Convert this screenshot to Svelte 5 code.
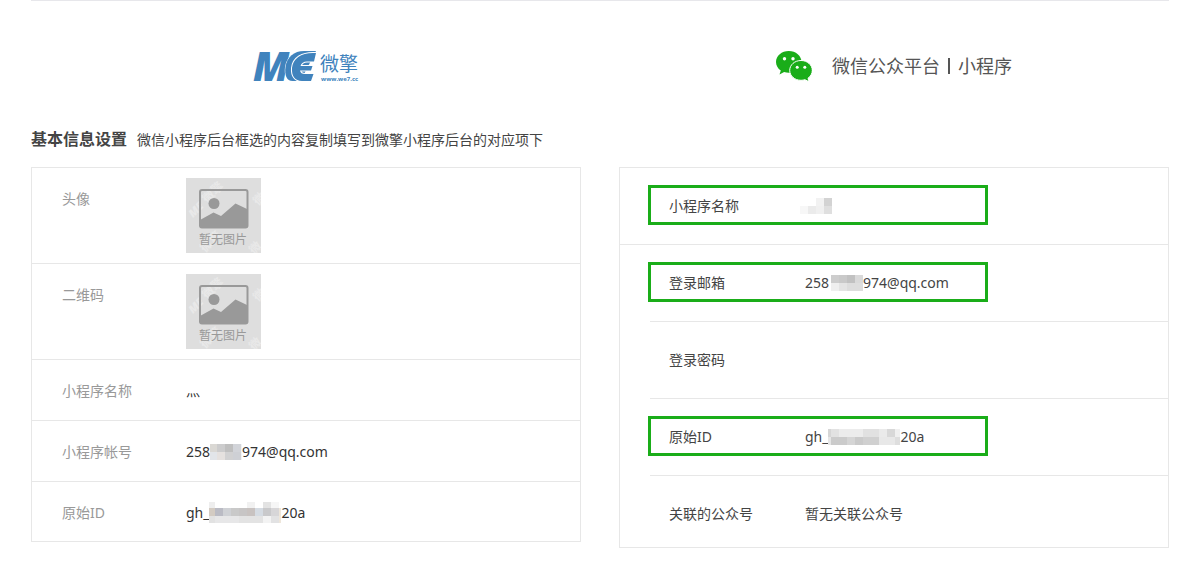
<script>
  const avatarRows = ['头像', '二维码'];

  // Each block is [x, y, width, height, colour]
  const masks = {
    account: {
      width: 32,
      height: 16,
      blocks: [
        [0, 0, 7, 8, '#dad8d4'], [7, 0, 8, 8, '#cccccd'], [15, 0, 8, 8, '#bfbfbf'], [23, 0, 8, 8, '#d2d4d9'],
        [0, 8, 7, 8, '#e2e5e9'], [7, 8, 8, 8, '#e5e1df'], [15, 8, 8, 8, '#d1d1d2'], [23, 8, 8, 8, '#ced0d5'],
        [31, 0, 1, 16, '#f1f3f5']
      ]
    },
    origin: {
      width: 72,
      height: 21,
      blocks: [
        [0, 0, 6, 6, '#eeeeee'], [38, 0, 8, 6, '#f1f1f1'], [54, 0, 8, 6, '#e3e3e3'], [62, 0, 8, 6, '#f6f6f6'],
        [0, 6, 6, 8, '#d3cbc2'], [6, 6, 8, 8, '#babbc4'], [14, 6, 8, 8, '#cfd1d5'], [22, 6, 8, 8, '#c9c9c9'],
        [30, 6, 8, 8, '#c7c5c5'], [38, 6, 8, 8, '#c8c2c0'], [46, 6, 8, 8, '#d5dbe2'], [54, 6, 8, 8, '#c9c9cb'],
        [62, 6, 8, 8, '#d7d6d8'], [70, 6, 2, 15, '#eee6da'], [0, 14, 6, 7, '#e2e2e2'], [6, 14, 24, 7, '#e7e7e8'],
        [30, 14, 24, 7, '#e3e3e3'], [54, 14, 8, 7, '#f3f3f3'], [62, 14, 8, 7, '#e2e2e3']
      ]
    },
    name: {
      width: 32,
      height: 16,
      blocks: [
        [16, 0, 8, 8, '#f2f2f2'], [24, 0, 8, 8, '#d3d3d3'], [0, 8, 8, 8, '#f7f7f7'],
        [8, 8, 8, 8, '#ebebeb'], [16, 8, 8, 8, '#f0f0f0'], [24, 8, 8, 8, '#dfdfdf']
      ]
    },
    mail: {
      width: 34,
      height: 16,
      blocks: [
        [2, 0, 8, 8, '#cdcdcd'], [10, 0, 8, 8, '#c9c9c9'], [18, 0, 8, 8, '#c1c1c1'], [26, 0, 8, 8, '#d9d9d9'],
        [2, 8, 8, 8, '#efefef'], [10, 8, 8, 8, '#e4e4e4'], [18, 8, 16, 8, '#dddddd']
      ]
    },
    ghid: {
      width: 72,
      height: 16,
      blocks: [
        [0, 0, 3, 8, '#d6d6d6'], [3, 0, 8, 8, '#e2e2e2'], [11, 0, 24, 8, '#ececec'], [35, 0, 16, 8, '#e1e1e1'],
        [51, 0, 8, 8, '#eaeaea'], [59, 0, 8, 8, '#d8d8d8'], [67, 0, 5, 8, '#f0f0f0'],
        [0, 8, 3, 8, '#e6e6e6'], [3, 8, 16, 8, '#cbcbcb'], [19, 8, 8, 8, '#d5d5d5'], [27, 8, 8, 8, '#cacaca'],
        [35, 8, 16, 8, '#d0d0d0'], [51, 8, 16, 8, '#e8e8e8'], [67, 8, 5, 8, '#dedede']
      ]
    }
  };
</script>

{#snippet mask(m)}
  <svg class="mask" width={m.width} height={m.height} shape-rendering="crispEdges" aria-hidden="true">
    {#each m.blocks as [x, y, w, h, fill]}
      <rect {x} {y} width={w} height={h} {fill} />
    {/each}
  </svg>
{/snippet}

<main>
  <header>
    <div class="brand">
      <svg class="logo" width="104" height="32" viewBox="0 0 104 32" fill="#4083bd">
        <text class="mark" x="-1" y="31">M</text>
        <g stroke="#fff" stroke-width="2" paint-order="stroke">
          <path stroke-width="1" d="M62 1H50C40 1 33 7 31.500 17c-1 8 1 14 7 14h8z" />
          <path d="M62 3C48 2 39 8 38 18c-.6 8 3 13 10 13h9l2.500-7H51c-3 0-4.500-1-5-3.500h11l1.500-4.500H46.500c1-3 3-4.500 6.500-4.500h7z" />
        </g>
        <text class="brand-name" x="66" y="21">微擎</text>
        <text class="brand-url" x="67" y="31">www.we7.cc</text>
      </svg>
    </div>
    <div class="brand">
      <svg width="36" height="31" viewBox="0 0 36 31">
        <path fill="#1aad19" d="M12.800 0C5.700 0 0 4.900 0 10.900c0 3.500 1.900 6.600 4.800 8.600L3.500 23.500l4.600-2.400c1.500.4 3 .7 4.700.7 7 0 12.700-4.900 12.700-10.900S19.800 0 12.800 0z" />
        <circle cx="8.500" cy="7.700" r="1.700" fill="#fff" />
        <circle cx="17" cy="7.700" r="1.700" fill="#fff" />
        <path fill="#1aad19" stroke="#fff" d="M25 9.500c-6.300 0-11.300 4.400-11.300 9.900s5 9.900 11.300 9.900c1.400 0 2.700-.2 3.900-.6l4.200 2.100-1.100-3.600c2.600-1.800 4.300-4.600 4.300-7.800 0-5.500-5-9.900-11.300-9.900z" />
        <circle cx="21.200" cy="16.200" r="1.500" fill="#fff" />
        <circle cx="28.800" cy="16.200" r="1.500" fill="#fff" />
      </svg>
      <span class="platform">微信公众平台<i></i>小程序</span>
    </div>
  </header>

  <div class="heading">
    <h1>基本信息设置</h1>
    <p>微信小程序后台框选的内容复制填写到微擎小程序后台的对应项下</p>
  </div>

  <div class="columns">
    <dl class="panel site">
      {#each avatarRows as label}
        <div class="row tall">
          <dt>{label}</dt>
          <dd>
            <svg class="picture" width="75" height="75" viewBox="0 0 75 75">
              <rect width="75" height="75" fill="#dedede" />
              <g fill="#e9e9e9">
                <g transform="translate(7 40) rotate(-45)">
                  <text class="wm-mark">ME</text>
                  <text class="wm-name" x="20">微擎</text>
                </g>
                <text class="wm-name" transform="translate(72 28) rotate(-45)">微</text>
                <text class="wm-name" transform="translate(19 75) rotate(-45)">微擎</text>
                <text class="wm-name" transform="translate(68 77) rotate(-45)">微</text>
              </g>
              <rect x="14" y="12" width="47.500" height="37.500" rx="2" fill="none" stroke="#999" stroke-width="2" />
              <circle cx="28" cy="25.500" r="5.500" fill="#999" />
              <path d="M14 42L27.500 34.500 35 38 49.500 25.500 61 31V49.500H14z" fill="#999" />
              <text class="empty" x="13" y="66">暂无图片</text>
            </svg>
          </dd>
        </div>
      {/each}
      <div class="row"><dt>小程序名称</dt><dd>灬</dd></div>
      <div class="row"><dt>小程序帐号</dt><dd>258{@render mask(masks.account)}974@qq.com</dd></div>
      <div class="row"><dt>原始ID</dt><dd>gh_{@render mask(masks.origin)}20a</dd></div>
    </dl>

    <dl class="panel wechat">
      <div class="row">
        <div class="field framed"><dt>小程序名称</dt><dd class="hidden-name">{@render mask(masks.name)}</dd></div>
      </div>
      <div class="row">
        <div class="field framed"><dt>登录邮箱</dt><dd>258{@render mask(masks.mail)}974@qq.com</dd></div>
      </div>
      <div class="row inset">
        <div class="field"><dt>登录密码</dt><dd></dd></div>
      </div>
      <div class="row inset">
        <div class="field framed"><dt>原始ID</dt><dd>gh_{@render mask(masks.ghid)}20a</dd></div>
      </div>
      <div class="row inset">
        <div class="field"><dt>关联的公众号</dt><dd>暂无关联公众号</dd></div>
      </div>
    </dl>
  </div>
</main>

<style>
  :global(body) {
    margin: 0;
    background: #fff;
  }

  main {
    margin: 0 31px;
    border-top: 1px solid #e7e7eb;
    padding-bottom: 28px;
    color: #333;
    font: 14px/20px "Noto Sans", "Noto Sans CJK SC", sans-serif;
  }

  header,
  .columns {
    display: grid;
    grid-template-columns: 1fr 1fr;
    column-gap: 38px;
    align-items: start;
  }

  .brand {
    display: flex;
    align-items: center;
    justify-content: center;
    gap: 20px;
    height: 130px;
  }

  .logo {
    overflow: visible;
  }

  .mark {
    font: italic 800 40px "Open Sans", sans-serif;
  }

  .brand-name {
    font: 19px "Noto Sans CJK SC", sans-serif;
  }

  .brand-url {
    font: bold 6px "Open Sans", sans-serif;
  }

  .platform {
    display: flex;
    align-items: center;
    color: #555;
    font-size: 18px;
    line-height: 24px;
  }

  .platform i {
    width: 2px;
    height: 16px;
    margin: 0 8px;
    background: #555;
  }

  .heading {
    display: flex;
    align-items: baseline;
    gap: 10px;
    height: 36px;
    color: #444;
    line-height: 16px;
  }

  h1 {
    margin: 0;
    font-size: 16px;
    line-height: 16px;
  }

  p,
  dl,
  dd {
    margin: 0;
  }

  .panel {
    border: 1px solid #e7e7e7;
  }

  .row + .row {
    border-top: 1px solid #e7e7e7;
  }

  .site .row {
    display: flex;
    align-items: center;
    height: 58px;
    padding: 2px 0 0 30px;
  }

  .site .row:last-child {
    height: 57px;
  }

  .site .tall {
    align-items: flex-start;
    height: 75px;
    padding-top: 10px;
    padding-bottom: 10px;
  }

  .site .tall dt {
    padding-top: 11px;
  }

  .site dt {
    width: 124px;
    color: #999;
  }

  dd {
    display: flex;
    align-items: center;
  }

  .picture,
  .mask {
    display: block;
  }

  .wm-mark {
    font: italic 800 11px "Open Sans", sans-serif;
  }

  .wm-name {
    font: bold 12px "Noto Sans CJK SC", sans-serif;
  }

  .empty {
    fill: #999;
    font: 12px "Noto Sans CJK SC", sans-serif;
  }

  .wechat .row {
    display: flex;
    align-items: center;
    height: 74px;
    padding: 0 0 2px 28px;
  }

  .wechat .inset {
    margin-left: 30px;
    padding-left: 0;
  }

  .wechat .row:last-child {
    height: 69px;
    padding: 2px 0 0;
  }

  .field {
    box-sizing: border-box;
    display: flex;
    align-items: center;
    width: 340px;
    height: 40px;
    border: 3px solid transparent;
    padding: 2px 0 0 18px;
    color: #444;
  }

  .inset .field {
    margin-left: -2px;
  }

  .framed {
    border-color: #1aad19;
  }

  .field dt {
    width: 136px;
  }

  .hidden-name {
    margin-left: -5px;
  }
</style>
